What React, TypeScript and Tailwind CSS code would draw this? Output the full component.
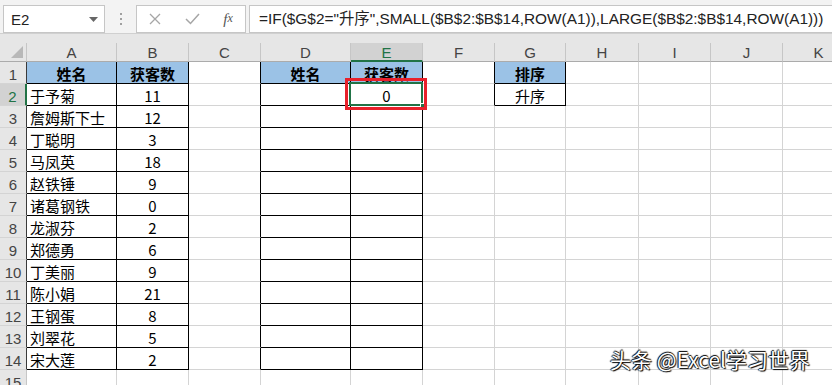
import React from "react";

const names = ["于予菊", "詹姆斯下士", "丁聪明", "马凤英", "赵铁锤", "诸葛钢铁", "龙淑芬", "郑德勇", "丁美丽", "陈小娟", "王钢蛋", "刘翠花", "宋大莲"];
const nums = [11, 12, 3, 18, 9, 0, 2, 6, 9, 21, 8, 5, 2];
const cols = ["A", "B", "C", "D", "E", "F", "G", "H", "I", "J", "K"];

const CJK = "font-['Noto_Sans_CJK_SC','Noto_Sans',sans-serif]";

function cellBorders(r: number, c: number): string {
  const inAB = (c === 1 || c === 2) && r >= 1 && r <= 14;
  const inDE = (c === 4 || c === 5) && r >= 1 && r <= 14;
  const inG = c === 7 && r >= 1 && r <= 2;
  const leftOfD = c === 3 && r >= 1 && r <= 14;
  const leftOfG = c === 6 && r >= 1 && r <= 2;
  const right = inAB || inDE || inG || leftOfD || leftOfG ? "border-r-black" : "border-r-[#d4d4d4]";
  const bottom = inAB || inDE || inG ? "border-b-black" : "border-b-[#d4d4d4]";
  return right + " " + bottom;
}

function Cell({ r, c }: { r: number; c: number }) {
  const isHeader = r === 1 && (c === 1 || c === 2 || c === 4 || c === 5 || c === 7);
  const bg = isHeader ? "bg-[#9bc2e6]" : "bg-white";
  let content: React.ReactNode = null;
  let align = "justify-center";
  if (r === 1) {
    if (c === 1 || c === 4) content = <span className="font-bold">姓名</span>;
    if (c === 2 || c === 5) content = <span className="font-bold">获客数</span>;
    if (c === 7) content = <span className="font-bold">排序</span>;
  } else if (r >= 2 && r <= 14) {
    if (c === 1) {
      content = names[r - 2];
      align = "justify-start pl-[3px]";
    }
    if (c === 2) content = nums[r - 2];
  }
  if (r === 2 && c === 7) content = "升序";
  if (r === 2 && c === 5) content = "0";
  const isSel = r === 2 && c === 5;
  return (
    <div
      className={`relative h-[22px] border-r border-b ${cellBorders(r, c)} ${bg} flex items-center ${align} ${CJK} text-[15px] leading-none text-black pt-[1px] ${isSel ? "z-10" : ""}`}
    >
      {content}
      {isSel && (
        <>
          <div className="absolute left-[-2px] top-[-2px] w-[74px] h-[24px] border-2 border-[#217346] pointer-events-none" />
          <div className="absolute right-[-4px] bottom-[-4px] w-[6px] h-[6px] bg-[#217346] border border-white pointer-events-none" />
          <div className="absolute left-[-6px] top-[-6px] w-[82px] h-[32px] border-[3px] border-[#e8212b] pointer-events-none" />
        </>
      )}
    </div>
  );
}

function RowHeader({ r }: { r: number }) {
  const sel = r === 2;
  const right = sel
    ? "border-r-2 border-r-[#217346]"
    : r >= 1 && r <= 14
    ? "border-r border-r-[#3a3a3a]"
    : "border-r border-r-[#c6c6c6]";
  return (
    <div
      className={`h-[22px] border-b border-b-[#d4d4d4] ${right} ${sel ? "bg-[#d2d2d2] text-[#217346]" : "bg-[#e6e6e6] text-[#444]"} flex items-center justify-center font-['Liberation_Sans',sans-serif] text-[15px] leading-none pt-[3px]`}
    >
      {r}
    </div>
  );
}

function ColHeader({ c }: { c: number }) {
  const sel = c === 5;
  return (
    <div
      className={`relative h-[19px] ${sel ? "bg-[#d2d2d2] text-[#217346] border-b-2 border-b-[#217346]" : "bg-[#e6e6e6] text-[#444] border-b border-b-[#ababab]"} border-r border-r-[#c6c6c6] flex items-center justify-center font-['Liberation_Sans',sans-serif] text-[15px] leading-none pt-[1px]`}
    >
      {cols[c - 1]}
    </div>
  );
}

export default function App() {
  const rows = Array.from({ length: 15 }, (_, i) => i + 1);
  return (
    <div className="relative w-[832px] h-[385px] overflow-hidden bg-white">
      <div className="h-[34px] bg-[#f3f3f3] border-b border-b-[#d0d0d0] flex items-start pt-[5px] pl-[3px]">
        <div className="w-[102px] h-[28px] bg-white border border-[#c6c6c6] flex items-center justify-between pl-[7px] pr-[6px]">
          <span className="font-['Liberation_Sans',sans-serif] text-[15px] text-[#222] leading-none">E2</span>
          <svg width="9" height="5" viewBox="0 0 9 5">
            <path d="M0 0 L9 0 L4.5 5 Z" fill="#666" />
          </svg>
        </div>
        <div className="w-[31px] h-[28px] flex flex-col items-center justify-center gap-[3px]">
          <div className="w-[2px] h-[2px] bg-[#a0a0a0]" />
          <div className="w-[2px] h-[2px] bg-[#a0a0a0]" />
          <div className="w-[2px] h-[2px] bg-[#a0a0a0]" />
        </div>
        <div className="w-[110px] h-[28px] bg-white border border-[#c6c6c6] flex items-center">
          <div className="w-[36px] flex justify-center">
            <svg width="12" height="12" viewBox="0 0 12 12">
              <path d="M1 1 L11 11 M11 1 L1 11" stroke="#a6a6a6" strokeWidth="1.3" />
            </svg>
          </div>
          <div className="w-[38px] flex justify-center">
            <svg width="15" height="12" viewBox="0 0 15 12">
              <path d="M1 6 L5.5 10.5 L14 1" stroke="#a6a6a6" strokeWidth="1.5" fill="none" />
            </svg>
          </div>
          <div className="w-[34px] flex justify-center font-['Liberation_Serif',serif] italic text-[15px] text-[#555] leading-none">
            f<span className="text-[12px]">x</span>
          </div>
        </div>
        <div className="ml-[3px] flex-1 h-[28px] bg-white border border-[#c6c6c6] border-r-0 flex items-center pl-[9px] whitespace-nowrap overflow-hidden">
          <span className="font-['Liberation_Sans','Noto_Sans_CJK_SC',sans-serif] text-[15.4px] text-[#222] leading-none">
            =IF($G$2="升序",SMALL($B$2:$B$14,ROW(A1)),LARGE($B$2:$B$14,ROW(A1)))
          </span>
        </div>
      </div>
      <div className="h-[9px] bg-[#e6e6e6]" />
      <div className="grid grid-cols-[27px_90px_72px_72px_90px_72px_72px_71px_73px_72px_72px_72px] w-[855px]">
        <div className="relative h-[19px] bg-[#e6e6e6] border-r border-r-[#c6c6c6] border-b border-b-[#ababab]">
          <svg className="absolute right-[3px] bottom-[3px]" width="12" height="12" viewBox="0 0 12 12">
            <path d="M12 0 L12 12 L0 12 Z" fill="#b8b8b8" />
          </svg>
        </div>
        {cols.map((_, i) => (
          <ColHeader key={i} c={i + 1} />
        ))}
        {rows.map((r) => (
          <React.Fragment key={r}>
            <RowHeader r={r} />
            {cols.map((_, i) => (
              <Cell key={i} r={r} c={i + 1} />
            ))}
          </React.Fragment>
        ))}
      </div>
      <div className="absolute left-[610px] top-[349px] z-20 font-['Noto_Sans_CJK_SC',sans-serif] text-[21px] leading-none text-white [text-shadow:1px_1px_1px_#000,-1px_0_1px_#000,0_-1px_1px_#000]">
        头条 @Excel学习世界
      </div>
    </div>
  );
}
